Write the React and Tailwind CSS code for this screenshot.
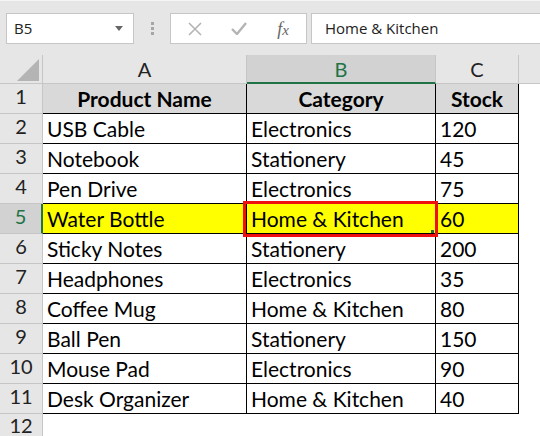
import React from "react";

const rows = [
  ["USB Cable", "Electronics", "120"],
  ["Notebook", "Stationery", "45"],
  ["Pen Drive", "Electronics", "75"],
  ["Water Bottle", "Home & Kitchen", "60"],
  ["Sticky Notes", "Stationery", "200"],
  ["Headphones", "Electronics", "35"],
  ["Coffee Mug", "Home & Kitchen", "80"],
  ["Ball Pen", "Stationery", "150"],
  ["Mouse Pad", "Electronics", "90"],
  ["Desk Organizer", "Home & Kitchen", "40"],
];

function RowHead({ n, active }) {
  return (
    <div
      className={
        "flex justify-center pt-[2px] text-[20px] leading-[20px] border-b border-[#c6c6c6] " +
        (active
          ? "bg-[#d2d2d2] text-[#217346] border-r-2 border-r-[#217346]"
          : "bg-[#e6e6e6] text-[#222] border-r border-r-[#c6c6c6]")
      }
    >
      {n}
    </div>
  );
}

function Cell({ children, yellow, selected, head }) {
  return (
    <div
      className={
        "relative flex items-end border-r border-b border-black text-[21px] leading-[24px] pb-[2px] " +
        (head ? "justify-center font-bold bg-[#d9d9d9] " : "pl-[4px] ") +
        (yellow ? "bg-[#ffff00]" : head ? "" : "bg-white")
      }
    >
      {children}
      {selected && (
        <div className="absolute z-10 -left-[4px] -top-[3px] -right-[3px] -bottom-[4px] border-[3px] border-[#ee1111]">
          <div className="absolute right-[1px] bottom-[1px] w-[3px] h-[3px] bg-[#217346]" />
        </div>
      )}
    </div>
  );
}

export default function App() {
  return (
    <div className="w-[540px] h-[436px] overflow-hidden bg-white text-black font-['Lato','Noto_Sans',sans-serif]">
      {/* formula bar */}
      <div className="h-[55px] bg-[#e6e6e6] border-t border-[#f4f4f4] flex items-start pt-[12px]">
        <div className="ml-[6px] w-[128px] h-[31px] bg-white border border-[#c6c6c6] flex items-center justify-between pl-[7px] pr-[10px] font-['Open_Sans',sans-serif] text-[15px] text-[#222]">
          <span>B5</span>
          <svg width="8" height="5" viewBox="0 0 8 5">
            <path d="M0 0h8L4 5z" fill="#666" />
          </svg>
        </div>
        <div className="w-[36px] h-[31px] flex flex-col items-center justify-center gap-[2px]">
          <span className="w-[3px] h-[3px] bg-[#a6a6a6]" />
          <span className="w-[3px] h-[3px] bg-[#a6a6a6]" />
          <span className="w-[3px] h-[3px] bg-[#a6a6a6]" />
        </div>
        <div className="w-[137px] h-[31px] bg-white border border-[#c6c6c6] flex items-center">
          <div className="w-[46px] flex justify-center pl-[2px]">
            <svg width="14" height="14" viewBox="0 0 14 14">
              <path d="M1 1L13 13M13 1L1 13" stroke="#b4b4b4" strokeWidth="1.6" />
            </svg>
          </div>
          <div className="w-[44px] flex justify-center">
            <svg width="16" height="13" viewBox="0 0 16 13">
              <path d="M1 7L6 12L15 1" stroke="#b4b4b4" strokeWidth="2.4" fill="none" />
            </svg>
          </div>
          <div className="w-[44px] flex justify-center font-['Liberation_Serif',serif] italic text-[18px] text-[#666] leading-none">
            <span>f</span>
            <span className="text-[15px] mt-[3px]">x</span>
          </div>
        </div>
        <div className="ml-[4px] flex-1 h-[31px] bg-white border border-r-0 border-[#c6c6c6] flex items-center pl-[13px] font-['Open_Sans',sans-serif] text-[15px] text-[#222]">
          Home &amp; Kitchen
        </div>
      </div>

      {/* sheet */}
      <div className="grid grid-cols-[43px_204px_189px_83px_1fr] grid-rows-[29px_repeat(11,30px)_22px]">
        {/* column headers */}
        <div className="relative bg-[#e6e6e6] border-r border-b border-[#c6c6c6]">
          <svg className="absolute left-[17px] top-[4px]" width="22" height="22" viewBox="0 0 22 22">
            <path d="M22 0V22H0z" fill="#b4b4b4" />
          </svg>
        </div>
        <div className="flex justify-center items-end pb-[3px] bg-[#e6e6e6] border-r border-b border-[#c6c6c6] text-[20px] leading-[22px] text-[#222]">
          A
        </div>
        <div className="flex justify-center items-end pb-[2px] bg-[#d2d2d2] border-r border-r-[#c6c6c6] border-b-2 border-b-[#217346] text-[20px] leading-[22px] text-[#217346]">
          B
        </div>
        <div className="flex justify-center items-end pb-[3px] bg-[#e6e6e6] border-r border-b border-[#c6c6c6] text-[20px] leading-[22px] text-[#222]">
          C
        </div>
        <div className="bg-[#e6e6e6] border-b border-[#c6c6c6]" />

        {/* header row */}
        <RowHead n={1} />
        <Cell head>Product Name</Cell>
        <Cell head>Category</Cell>
        <Cell head>Stock</Cell>
        <div />

        {rows.map((r, i) => {
          const n = i + 2;
          const active = n === 5;
          return (
            <React.Fragment key={n}>
              <RowHead n={n} active={active} />
              <Cell yellow={active}>{r[0]}</Cell>
              <Cell yellow={active} selected={active}>
                {r[1]}
              </Cell>
              <Cell yellow={active}>{r[2]}</Cell>
              <div />
            </React.Fragment>
          );
        })}

        <div className="flex justify-center pt-[1px] text-[20px] leading-[20px] bg-[#e6e6e6] text-[#222] border-r border-[#c6c6c6]">
          12
        </div>
        <div />
        <div />
        <div />
        <div />
      </div>
    </div>
  );
}
